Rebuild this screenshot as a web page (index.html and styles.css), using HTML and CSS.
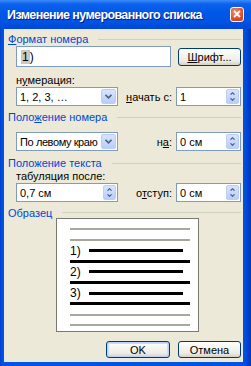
FILE: index.html
```html
<!DOCTYPE html>
<html lang="ru">
<head>
  <meta charset="UTF-8">
  <title>Изменение нумерованного списка</title>
  <link rel="stylesheet" href="styles.css">
</head>
<body>
  <div class="window">
    <div class="titlebar">
      <span class="title">Изменение нумерованного списка</span>
      <span class="close">
        <svg width="8" height="8" viewBox="0 0 8 8"><path d="M1 1 L7 7 M7 1 L1 7" stroke="#fff" stroke-width="1.8"/></svg>
      </span>
    </div>

    <div class="client">
      <div class="group-head head-format"><span><u>Ф</u>ормат номера</span></div>
      <div class="row row-format">
        <div class="field format-field"><span class="code">1</span>)</div>
        <button class="btn font-btn"><u>Ш</u>рифт...</button>
      </div>

      <div class="caption cap-style">н<u>у</u>мерация:</div>
      <div class="row">
        <div class="field w-left"><span class="val">1, 2, 3, …</span><span class="drop"><svg width="7" height="5" viewBox="0 0 7 5"><path d="M0.5 0.8 L3.5 3.8 L6.5 0.8" fill="none" stroke="#4D6185" stroke-width="1.6"/></svg></span></div>
        <span class="lbl"><u>н</u>ачать с:</span>
        <div class="field w-spin"><span class="val">1</span><span class="spin"><svg width="5" height="3" viewBox="0 0 5 3"><path d="M0.5 2.7 L2.5 0.7 L4.5 2.7" fill="none" stroke="#4D6185" stroke-width="1.2"/></svg><svg width="5" height="3" viewBox="0 0 5 3"><path d="M0.5 0.3 L2.5 2.3 L4.5 0.3" fill="none" stroke="#4D6185" stroke-width="1.2"/></svg></span></div>
      </div>

      <div class="group-head head-pos"><span>Поло<u>ж</u>ение номера</span></div>
      <div class="row row-pos">
        <div class="field w-left"><span class="val tight">По левому краю</span><span class="drop"><svg width="7" height="5" viewBox="0 0 7 5"><path d="M0.5 0.8 L3.5 3.8 L6.5 0.8" fill="none" stroke="#4D6185" stroke-width="1.6"/></svg></span></div>
        <span class="lbl">н<u>а</u>:</span>
        <div class="field w-spin"><span class="val">0 см</span><span class="spin"><svg width="5" height="3" viewBox="0 0 5 3"><path d="M0.5 2.7 L2.5 0.7 L4.5 2.7" fill="none" stroke="#4D6185" stroke-width="1.2"/></svg><svg width="5" height="3" viewBox="0 0 5 3"><path d="M0.5 0.3 L2.5 2.3 L4.5 0.3" fill="none" stroke="#4D6185" stroke-width="1.2"/></svg></span></div>
      </div>

      <div class="group-head head-text"><span>Положение текста</span></div>
      <div class="caption cap-tab">табуляция после:</div>
      <div class="row">
        <div class="field w-left"><span class="val">0,7 см</span><span class="spin"><svg width="5" height="3" viewBox="0 0 5 3"><path d="M0.5 2.7 L2.5 0.7 L4.5 2.7" fill="none" stroke="#4D6185" stroke-width="1.2"/></svg><svg width="5" height="3" viewBox="0 0 5 3"><path d="M0.5 0.3 L2.5 2.3 L4.5 0.3" fill="none" stroke="#4D6185" stroke-width="1.2"/></svg></span></div>
        <span class="lbl">о<u>т</u>ступ:</span>
        <div class="field w-spin"><span class="val">0 см</span><span class="spin"><svg width="5" height="3" viewBox="0 0 5 3"><path d="M0.5 2.7 L2.5 0.7 L4.5 2.7" fill="none" stroke="#4D6185" stroke-width="1.2"/></svg><svg width="5" height="3" viewBox="0 0 5 3"><path d="M0.5 0.3 L2.5 2.3 L4.5 0.3" fill="none" stroke="#4D6185" stroke-width="1.2"/></svg></span></div>
      </div>

      <div class="group-head head-sample"><span>Образец</span></div>
      <div class="preview">
        <div class="pl"><span class="ln gray"></span></div>
        <div class="pl"><span class="ln gray"></span></div>
        <div class="pl"><span class="num">1)</span><span class="ln short"></span></div>
        <div class="pl"><span class="ln black"></span></div>
        <div class="pl"><span class="num">2)</span><span class="ln short"></span></div>
        <div class="pl"><span class="ln black"></span></div>
        <div class="pl"><span class="num">3)</span><span class="ln short"></span></div>
        <div class="pl"><span class="ln black"></span></div>
        <div class="pl"><span class="ln gray"></span></div>
        <div class="pl"><span class="ln gray"></span></div>
      </div>

      <div class="buttons">
        <button class="btn default ok">OK</button>
        <button class="btn cancel">Отмена</button>
      </div>
    </div>
  </div>
</body>
</html>
```

FILE: styles.css
```css
* {
  box-sizing: border-box;
}

body {
  margin: 0;
  font-family: "Liberation Sans", Arial, sans-serif;
  font-size: 11px;
  color: #000;
}

u {
  text-decoration: underline;
  text-underline-offset: 1px;
}

.window {
  width: 251px;
  height: 366px;
  display: flex;
  flex-direction: column;
  background: linear-gradient(90deg, #0042D0 0, #0054E3 3px, #0054E3 243px, #0047D6 247px, #0034B0 251px);
}

.titlebar {
  height: 29px;
  display: flex;
  align-items: center;
  padding: 0 7px;
  background: linear-gradient(#3C8CF8 0, #0B62EC 4px, #0058E8 12px, #0053E3 22px, #0048D4 29px);
}

.title {
  flex: 1;
  color: #fff;
  font-weight: bold;
  font-size: 12.5px;
  letter-spacing: -0.6px;
  text-shadow: 1px 1px #0A1E84;
  white-space: nowrap;
}

.close {
  width: 14px;
  height: 15px;
  margin-top: -1px;
  border: 1px solid #fff;
  border-radius: 3px;
  background: radial-gradient(circle at 35% 30%, #F28A6A, #D9461E 70%);
  display: flex;
  align-items: center;
  justify-content: center;
}

.client {
  flex: 1;
  margin: 0 8px 4px 4px;
  padding: 0 2px 0 4px;
  background: #ECE9D8;
  display: flex;
  flex-direction: column;
}

.group-head {
  height: 12px;
  display: flex;
  align-items: center;
  gap: 10px;
  color: #0046D5;
  white-space: nowrap;
}

.group-head::after {
  content: "";
  flex: 1;
  height: 1px;
  background: #D0D0BF;
}

.head-format { margin-top: 4px; }
.head-pos { margin-top: 5px; }
.head-text { margin-top: 6px; }
.head-sample { margin-top: 5px; height: 11px; }

.caption {
  height: 12px;
  line-height: 12px;
  padding-left: 8px;
}

.cap-style { margin-top: 7px; }
.cap-tab { margin-top: 2px; height: 11px; line-height: 11px; }

.row {
  display: flex;
  align-items: center;
  padding-left: 8px;
  margin-top: 1px;
}

.row-pos { margin-top: 9px; }

.field {
  height: 19px;
  display: flex;
  align-items: center;
  padding-left: 3px;
  background: #fff;
  border: 1px solid #7F9DB9;
  white-space: nowrap;
}

.val {
  flex: 1;
  min-width: 0;
  overflow: hidden;
}

.tight {
  letter-spacing: -0.4px;
}

.format-field {
  width: 155px;
  height: 21px;
  padding-left: 4px;
  font-size: 12px;
}

.code {
  background: #C8C8C8;
  padding: 0 1px;
}

.w-left {
  width: 102px;
}

.w-spin {
  width: 65px;
}

.lbl {
  flex: 1;
  text-align: right;
  padding-right: 4px;
  white-space: nowrap;
}

.drop {
  margin-right: 1px;
  width: 15px;
  height: 15px;
  border: 1px solid #BCCDF7;
  border-radius: 2px;
  background: linear-gradient(#D8E4FE, #B9CDF9);
  display: flex;
  align-items: center;
  justify-content: center;
}

.spin {
  margin-right: 1px;
  width: 13px;
  height: 15px;
  border: 1px solid #BCCDF7;
  border-radius: 2px;
  background: linear-gradient(#D8E4FE, #B9CDF9);
  display: flex;
  flex-direction: column;
  align-items: center;
  justify-content: center;
  gap: 3px;
}

.btn {
  font-family: "Liberation Sans", Arial, sans-serif;
  font-size: 11px;
  color: #000;
  border: 1px solid #003C74;
  border-radius: 3px;
  background: linear-gradient(#FFFFFF 0, #F4F3EE 45%, #ECEBE6 75%, #D6D0C5 100%);
  padding: 0;
  display: flex;
  align-items: center;
  justify-content: center;
}

.font-btn {
  width: 63px;
  height: 18px;
  margin-left: 7px;
}

.preview {
  margin-left: 48px;
  width: 143px;
  height: 114px;
  border: 1px solid #7A7A72;
  background: #fff;
  padding: 5px 0 0 13px;
  display: flex;
  flex-direction: column;
}

.pl {
  height: 10.67px;
  display: flex;
  align-items: center;
}

.ln {
  display: block;
}

.gray {
  width: 120px;
  height: 2px;
  background: #A8A89E;
}

.black {
  width: 120px;
  height: 3px;
  background: #000;
}

.short {
  width: 94px;
  height: 3px;
  background: #000;
}

.num {
  width: 19px;
  font-size: 12px;
  line-height: 10px;
}

.buttons {
  margin-top: 9px;
  display: flex;
  justify-content: flex-end;
  gap: 8px;
}

.ok {
  width: 64px;
  height: 17px;
}

.cancel {
  width: 63px;
  height: 17px;
}

.default {
  box-shadow: inset 0 0 0 1px #B9CFF5, inset 0 0 0 2px #CCDDFA;
}
```
